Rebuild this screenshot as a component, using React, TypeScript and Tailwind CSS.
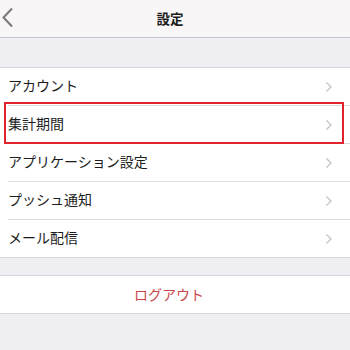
const items = ["アカウント", "集計期間", "アプリケーション設定", "プッシュ通知", "メール配信"];

function Chevron() {
  return (
    <svg width="8" height="12" viewBox="0 0 8 12" className="mr-[17px]">
      <path d="M1.5 1.5 L6 6 L1.5 10.5" fill="none" stroke="#c4c4c8" strokeWidth="1.4" />
    </svg>
  );
}

export default function App() {
  return (
    <div
      className="w-[350px] h-[350px] overflow-hidden bg-[#efeff4] text-[#1c1c1c]"
      style={{ fontFamily: '"Noto Sans CJK JP", "Liberation Sans", sans-serif' }}
    >
      <div className="relative h-[38px] bg-[#f8f6f6] border-b border-[#c6c6ca] flex items-center justify-center pr-[10px]">
        {/* back chevron */}
        <svg width="14" height="22" viewBox="0 0 14 22" className="absolute left-[1px] top-[7px]">
          <path d="M11 1.5 L2.5 10.5 L11 19.5" fill="none" stroke="#7a7a7a" strokeWidth="2" />
        </svg>
        <span className="text-[13.5px] font-bold">設定</span>
      </div>

      <div className="h-[29px]" />

      <div className="bg-white border-y border-[#d6d6da]">
        {items.map((label, i) => (
          <div key={label} className="relative">
            <div className="h-[37px] flex items-center justify-between pl-[8px]">
              <span className="text-[14px] leading-none pb-[3px]">{label}</span>
              <Chevron />
            </div>
            {i < items.length - 1 && <div className="ml-[8px] h-px bg-[#dcdcdf]" />}
            {i === 1 && (
              <div className="absolute left-[4px] top-[-4px] w-[340px] h-[42px] border-2 border-[#e0232d]" />
            )}
          </div>
        ))}
      </div>

      <div className="h-[17px]" />

      <div className="h-[39px] bg-white border-y border-[#d6d6da] flex items-center justify-center pr-[12px]">
        <span className="text-[14px] leading-none pb-[2px] text-[#c8474b]">ログアウト</span>
      </div>
    </div>
  );
}
